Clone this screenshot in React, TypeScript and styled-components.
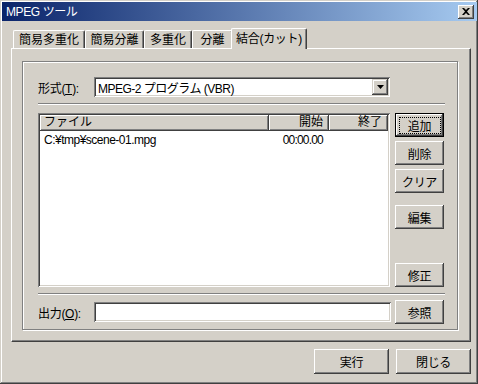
import React, { FC } from "react"
import styled, { createGlobalStyle } from "styled-components"

const face = "#d4d0c8"
const shadow = "#808080"
const dark = "#404040"
const font = `"Liberation Sans", "Noto Sans CJK JP", sans-serif`

const GlobalStyle = createGlobalStyle`
  * { box-sizing: border-box; }
  html, body { margin: 0; padding: 0; background: ${face}; }
  body { font-family: ${font}; font-size: 12px; color: #000; }
`

const Window = styled.div`
  width: 478px;
  height: 384px;
  background: ${face};
  padding: 2px 1px 2px 2px;
  display: flex;
  flex-direction: column;
  box-shadow: inset -1px -1px ${dark}, inset 1px 1px ${face},
    inset -2px -2px ${shadow}, inset 2px 2px #fff;
`

const TitleBar = styled.div`
  height: 19px;
  display: flex;
  align-items: center;
  padding: 0 3px 0 4px;
  background: linear-gradient(to right, #0a246a, #a6caf0);
  color: #fff;
`

const TitleText = styled.span`
  flex: 1;
  font-size: 12px;
  line-height: 18px;
  letter-spacing: -0.4px;
`

const CloseButton = styled.div`
  width: 16px;
  height: 14px;
  background: ${face};
  display: flex;
  align-items: center;
  justify-content: center;
  box-shadow: inset -1px -1px ${dark}, inset 1px 1px #fff,
    inset -2px -2px ${shadow};
`

const Body = styled.div`
  flex: 1;
  display: flex;
  flex-direction: column;
  padding: 7px 6px 0 9px;
`

const TabStrip = styled.div`
  display: flex;
  height: 20px;
  padding-left: 2px;
  align-items: flex-end;
`

const Tab = styled.div<{ $w: number; $active?: boolean }>`
  width: ${(p) => p.$w}px;
  height: ${(p) => (p.$active ? 21 : 18)}px;
  margin: 0 ${(p) => (p.$active ? -2 : 0)}px ${(p) => (p.$active ? -1 : 0)}px;
  position: relative;
  z-index: ${(p) => (p.$active ? 2 : 1)};
  background: ${face};
  border-left: 1px solid #fff;
  border-top: 1px solid #fff;
  border-right: 1px solid ${dark};
  border-radius: 2px 2px 0 0;
  box-shadow: inset -1px 0 ${shadow};
  display: flex;
  justify-content: center;
  padding-top: ${(p) => (p.$active ? 3 : 2)}px;
  font-size: 12px;
  line-height: 14px;
  white-space: nowrap;
  letter-spacing: ${(p) => (p.$active ? -0.3 : 0)}px;
`

const Panel = styled.div`
  height: 294px;
  border-top: 1px solid #fff;
  border-left: 1px solid #fff;
  border-right: 1px solid ${dark};
  border-bottom: 1px solid ${dark};
  box-shadow: inset -1px -1px ${shadow};
  padding: 12px 11px 10px 10px;
  display: flex;
`

const Group = styled.div`
  flex: 1;
  border: 1px solid ${shadow};
  box-shadow: inset 1px 1px #fff, 1px 1px #fff;
  padding: 15px 11px 0 15px;
  display: flex;
  flex-direction: column;
  margin-right: 1px;
  margin-bottom: 1px;
`

const FieldRow = styled.div<{ $h: number; $mt?: number }>`
  display: flex;
  align-items: center;
  height: ${(p) => p.$h}px;
  margin-top: ${(p) => p.$mt ?? 0}px;
`

const Label = styled.div`
  width: 56px;
  font-size: 12px;
  white-space: nowrap;
  letter-spacing: -0.3px;
`

const Sunken = styled.div`
  background: #fff;
  box-shadow: inset 1px 1px ${shadow}, inset -1px -1px #fff,
    inset 2px 2px ${dark}, inset -2px -2px ${face};
`

const Combo = styled(Sunken)`
  width: 296px;
  height: 20px;
  display: flex;
  align-items: center;
  padding: 2px;
`

const ComboText = styled.div`
  flex: 1;
  padding-left: 2px;
  font-size: 12px;
  letter-spacing: -0.5px;
`

const ArrowBox = styled.div`
  width: 16px;
  height: 16px;
  background: ${face};
  display: flex;
  align-items: center;
  justify-content: center;
  box-shadow: inset -1px -1px ${dark}, inset 1px 1px ${face},
    inset -2px -2px ${shadow}, inset 2px 2px #fff;
`

const TextBox = styled(Sunken)`
  width: 297px;
  height: 20px;
`

const Separator = styled.div<{ $mt: number }>`
  height: 2px;
  margin-top: ${(p) => p.$mt}px;
  margin-right: 1px;
  border-top: 1px solid ${shadow};
  border-bottom: 1px solid #fff;
`

const Middle = styled.div`
  display: flex;
  gap: 5px;
  height: 174px;
  margin-top: 8px;
`

const ListView = styled(Sunken)`
  width: 352px;
  padding: 2px;
  display: flex;
  flex-direction: column;
`

const HeaderRow = styled.div`
  display: flex;
  height: 16px;
`

const HeaderCell = styled.div<{ $w: number; $right?: boolean }>`
  width: ${(p) => p.$w}px;
  background: ${face};
  box-shadow: inset -1px -1px ${dark}, inset 1px 1px #fff,
    inset -2px -2px ${shadow};
  font-size: 12px;
  line-height: 15px;
  text-align: ${(p) => (p.$right ? "right" : "left")};
  padding: 0 ${(p) => (p.$right ? 6 : 0)}px 0 ${(p) => (p.$right ? 0 : 4)}px;
`

const ItemRow = styled.div`
  display: flex;
  height: 16px;
  margin-top: 1px;
  line-height: 16px;
  font-size: 12px;
`

const ItemCell = styled.div<{ $w: number; $right?: boolean }>`
  width: ${(p) => p.$w}px;
  text-align: ${(p) => (p.$right ? "right" : "left")};
  padding: 0 ${(p) => (p.$right ? 6 : 0)}px 0 ${(p) => (p.$right ? 0 : 4)}px;
  letter-spacing: ${(p) => (p.$right ? -0.8 : -0.5)}px;
`

const ButtonColumn = styled.div`
  width: 49px;
  display: flex;
  flex-direction: column;
`

const Button = styled.div<{ $w?: number; $h?: number; $mt?: number; $ml?: number; $default?: boolean }>`
  width: ${(p) => p.$w ?? 49}px;
  height: ${(p) => p.$h ?? 24}px;
  margin-top: ${(p) => p.$mt ?? 0}px;
  margin-left: ${(p) => p.$ml ?? 0}px;
  background: ${face};
  display: flex;
  align-items: center;
  justify-content: center;
  font-size: 12px;
  letter-spacing: -0.3px;
  position: relative;
  box-shadow: ${(p) =>
    p.$default
      ? `inset 0 0 0 1px #000, inset -2px -2px ${dark}, inset 2px 2px #fff, inset -3px -3px ${shadow}`
      : `inset -1px -1px ${dark}, inset 1px 1px #fff, inset -2px -2px ${shadow}`};
`

const FocusRect = styled.div`
  position: absolute;
  inset: 4px 3px 3px 4px;
  border: 1px dotted #000;
`

const AutoButton = styled(Button)`
  margin-top: auto;
`

const Footer = styled.div`
  display: flex;
  justify-content: flex-end;
  gap: 7px;
  margin-top: 7px;
`

const Ul = styled.span`
  text-decoration: underline;
`

const tabs = [
  { label: "簡易多重化", w: 72 },
  { label: "簡易分離", w: 59 },
  { label: "多重化", w: 48 },
  { label: "分離", w: 41 },
  { label: "結合(カット)", w: 76, active: true },
]

const App: FC = () => {
  return (
    <>
      <GlobalStyle />
      <Window>
        <TitleBar>
          <TitleText>MPEG ツール</TitleText>
          <CloseButton>
            <svg width="8" height="7" viewBox="0 0 8 7">
              <path d="M0 0h2l2 2 2-2h2L5 3.5 8 7H6L4 5 2 7H0l3-3.5z" fill="#000" />
            </svg>
          </CloseButton>
        </TitleBar>
        <Body>
          <TabStrip>
            {tabs.map((t) => (
              <Tab key={t.label} $w={t.w} $active={t.active}>
                {t.label}
              </Tab>
            ))}
          </TabStrip>
          <Panel>
            <Group>
              <FieldRow $h={20}>
                <Label>
                  形式(<Ul>T</Ul>):
                </Label>
                <Combo>
                  <ComboText>MPEG-2 プログラム (VBR)</ComboText>
                  <ArrowBox>
                    <svg width="7" height="4" viewBox="0 0 7 4">
                      <path d="M0 0h7L3.5 4z" fill="#000" />
                    </svg>
                  </ArrowBox>
                </Combo>
              </FieldRow>
              <Separator $mt={6} />
              <Middle>
                <ListView>
                  <HeaderRow>
                    <HeaderCell $w={229}>ファイル</HeaderCell>
                    <HeaderCell $w={60} $right>
                      開始
                    </HeaderCell>
                    <HeaderCell $w={59} $right>
                      終了
                    </HeaderCell>
                  </HeaderRow>
                  <ItemRow>
                    <ItemCell $w={229}>C:¥tmp¥scene-01.mpg</ItemCell>
                    <ItemCell $w={60} $right>
                      00:00.00
                    </ItemCell>
                    <ItemCell $w={59} $right></ItemCell>
                  </ItemRow>
                </ListView>
                <ButtonColumn>
                  <Button $default>
                    <FocusRect />
                    追加
                  </Button>
                  <Button $mt={4}>削除</Button>
                  <Button $mt={4}>クリア</Button>
                  <Button $mt={12}>編集</Button>
                  <AutoButton>修正</AutoButton>
                </ButtonColumn>
              </Middle>
              <Separator $mt={6} />
              <FieldRow $h={24} $mt={5}>
                <Label>
                  出力(<Ul>O</Ul>):
                </Label>
                <TextBox />
                <Button $ml={4}>参照</Button>
              </FieldRow>
            </Group>
          </Panel>
          <Footer>
            <Button $w={75} $h={25}>
              実行
            </Button>
            <Button $w={75} $h={25}>
              閉じる
            </Button>
          </Footer>
        </Body>
      </Window>
    </>
  )
}

export default App
